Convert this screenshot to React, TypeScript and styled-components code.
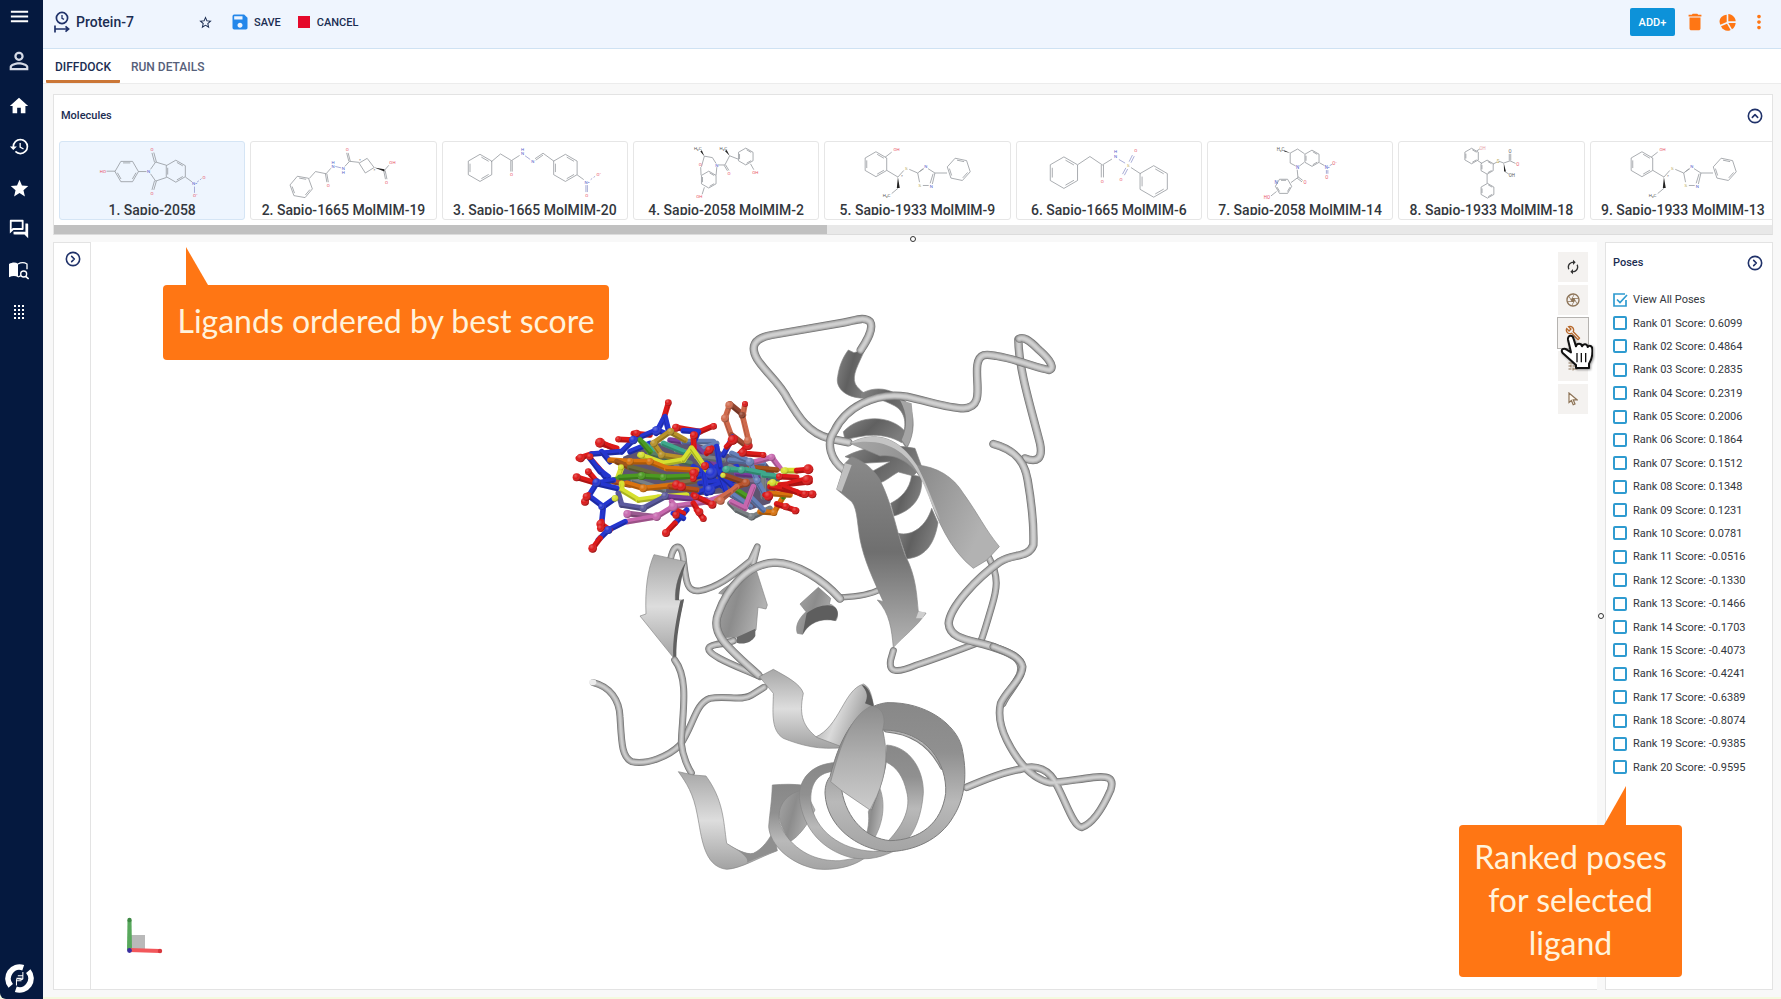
import React, { useState } from "react";
import styled, { createGlobalStyle, css } from "styled-components";
import {
  MdMenu,
  MdPersonOutline,
  MdHome,
  MdHistory,
  MdStar,
  MdStarBorder,
  MdOutlineForum,
  MdSave,
  MdDelete,
  MdMoreVert,
  MdAutorenew,
  MdOutlineCamera,
  MdOutlineBuild,
  MdTune,
} from "react-icons/md";
import { CircleChevronRight, CircleChevronUp } from "lucide-react";

const navy = "#05193f";
const orange = "#ff7614";
const line = "#e3e3e3";

const GlobalStyle = createGlobalStyle`
  * { box-sizing: border-box; }
  body {
    margin: 0;
    background: #f4fadf;
    font-family: Roboto, "Liberation Sans", sans-serif;
    color: #33373d;
  }
  button { font: inherit; color: inherit; border: 0; background: none; padding: 0; cursor: pointer; }
  h1, h2, h3 { margin: 0; font-weight: 500; }
`;

/* ---------- page frame ---------- */

const Shell = styled.div`
  display: flex;
  min-height: 100vh;
`;

const Sidebar = styled.nav`
  flex: 0 0 43px;
  display: flex;
  flex-direction: column;
  align-items: center;
  padding-right: 5px;
  background: ${navy};
  border-bottom-left-radius: 6px;
  color: #fff;
`;

const NavButton = styled.button<{ $height?: number; $last?: boolean }>`
  display: flex;
  align-items: center;
  justify-content: center;
  width: 36px;
  height: ${(p) => p.$height ?? 41}px;
  ${(p) => p.$last && css`margin-top: auto;`}
`;

const Main = styled.main`
  flex: 1;
  min-width: 0;
  display: flex;
  flex-direction: column;
  margin-bottom: 2px;
  background: #f8f8f8;
`;

const TopBar = styled.header`
  display: flex;
  align-items: center;
  height: 49px;
  padding: 0 10px 4px 11px;
  background: #eff5fe;
  border-bottom: 1px solid #cfe2f3;
  color: #1b2d52;
`;

const RecordName = styled.h1`
  display: flex;
  align-items: center;
  gap: 5px;
  width: 144px;
  font-size: 14px;
  line-height: 20px;
`;

const Action = styled.button`
  display: flex;
  align-items: center;
  gap: 4px;
  margin-right: 17px;
  font-size: 11px;
  font-weight: 500;
  color: #1b2d52;
`;

const StopSquare = styled.span`
  width: 12px;
  height: 12px;
  margin-right: 3px;
  background: #e5092b;
`;

const TopActions = styled.div`
  display: flex;
  align-items: center;
  gap: 8px;
  margin-left: auto;
`;

const AddButton = styled.button`
  width: 45px;
  height: 28px;
  border-radius: 2px;
  background: #0d92d9;
  color: #fff;
  font-size: 11px;
  font-weight: 500;
`;

const IconButton = styled.button<{ $color?: string; $wide?: boolean }>`
  display: flex;
  align-items: center;
  justify-content: center;
  width: ${(p) => (p.$wide ? 24 : 20)}px;
  height: 20px;
  color: ${(p) => p.$color ?? "#1f3169"};
`;

const Tabs = styled.div`
  display: flex;
  gap: 2px;
  height: 35px;
  padding-left: 3px;
  background: #fff;
  border-bottom: 1px solid #ececec;
`;

const Tab = styled.button<{ $active?: boolean }>`
  padding: 1px 9px 0;
  border-top: 3px solid transparent;
  border-bottom: 3px solid ${(p) => (p.$active ? "#cb7636" : "transparent")};
  border-radius: 1px;
  font-size: 12px;
  font-weight: 500;
  color: ${(p) => (p.$active ? "#1b2d52" : "#56607a")};
`;

const Workspace = styled.div`
  flex: 1;
  display: flex;
  flex-direction: column;
  padding: 10px 8px 7px 10px;
`;

/* ---------- molecules panel ---------- */

const MoleculesPanel = styled.section`
  background: #fff;
  border: 1px solid ${line};
  border-bottom-color: #dcdcdc;
  overflow: hidden;
`;

const PanelHead = styled.div<{ $height: number; $pad: number }>`
  display: flex;
  align-items: center;
  justify-content: space-between;
  height: ${(p) => p.$height}px;
  padding: 0 7px 5px ${(p) => p.$pad}px;
`;

const PanelTitle = styled.h2`
  font-size: 11px;
  line-height: 16px;
  color: #1b2d52;
`;

const CardStrip = styled.div`
  display: grid;
  grid-auto-flow: column;
  grid-auto-columns: calc((100% - 36px) / 9);
  gap: 5px;
  margin-left: 5px;
`;

const Card = styled.button<{ $selected?: boolean }>`
  display: flex;
  flex-direction: column;
  height: 79px;
  border: 1px solid ${(p) => (p.$selected ? "#d5e5f5" : "#e6e6e6")};
  border-radius: 3px;
  background: ${(p) => (p.$selected ? "#eef5fe" : "#fff")};
`;

const CardDrawing = styled.svg`
  width: 100%;
  height: 58px;
`;

const CardLabel = styled.span`
  width: 100%;
  height: 15px;
  overflow: hidden;
  font-size: 14px;
  line-height: 20px;
  font-weight: 500;
  text-align: center;
  white-space: nowrap;
  color: #33373d;
`;

const ScrollTrack = styled.div`
  height: 9px;
  margin-top: 5px;
  background: #e8e8e8;
`;

const ScrollThumb = styled.div`
  width: 45%;
  height: 100%;
  background: #c1c1c1;
`;

const Splitter = styled.div<{ $vertical?: boolean }>`
  display: flex;
  align-items: center;
  justify-content: center;
  flex: 0 0 ${(p) => (p.$vertical ? 8 : 7)}px;
`;

const SplitterKnob = styled.span`
  flex: none;
  width: 6px;
  height: 6px;
  border: 1px solid #333;
  border-radius: 50%;
  background: #fff;
`;

/* ---------- viewer ---------- */

const Lower = styled.div`
  flex: 1;
  display: flex;
`;

const Rail = styled.aside`
  display: flex;
  justify-content: center;
  align-items: flex-start;
  width: 38px;
  padding: 6px 0 0 2px;
  background: #fff;
  border: 1px solid ${line};
`;

const Viewer = styled.section`
  position: relative;
  flex: 1;
  display: flex;
  align-items: center;
  justify-content: center;
  min-width: 0;
  background: #fff;
  border-bottom: 1px solid ${line};
`;

const ProteinDrawing = styled.svg`
  flex: none;
  width: 568px;
  height: 631px;
`;

const AxisDrawing = styled.svg`
  position: absolute;
  left: 30px;
  bottom: 32px;
`;

const ToolStack = styled.div`
  position: absolute;
  top: 10px;
  right: 9px;
  display: flex;
  flex-direction: column;
  gap: 3px;
`;

const Tool = styled.button<{ $hover?: boolean; $color?: string }>`
  display: flex;
  align-items: center;
  justify-content: center;
  width: 30px;
  height: 30px;
  background: #f4f2f0;
  outline: ${(p) => (p.$hover ? "1px solid #b5b3b0" : "0")};
  color: ${(p) => p.$color ?? "#8d7458"};
`;

const HandPointer = styled.svg`
  position: absolute;
  left: 2px;
  top: 81px;
  filter: drop-shadow(1px 1px 1px rgba(0, 0, 0, 0.4));
`;

/* ---------- poses ---------- */

const PosesPanel = styled.aside`
  width: 168px;
  background: #fff;
  border: 1px solid ${line};
`;

const PoseList = styled.ul`
  display: grid;
  grid-auto-rows: 1fr;
  height: 491px;
  margin: 0;
  padding: 0 0 0 7px;
  list-style: none;
`;

const PoseLabel = styled.label`
  display: flex;
  align-items: center;
  gap: 6px;
  height: 100%;
  font-size: 11px;
  white-space: nowrap;
`;

const CheckHolder = styled.span`
  position: relative;
  width: 14px;
  height: 14px;
`;

const CheckInput = styled.input`
  appearance: none;
  display: block;
  width: 14px;
  height: 14px;
  margin: 0;
  border: 2px solid #2f9bd0;
  border-radius: 2px;
  background: #fff;
  &:checked { border-color: transparent; }
`;

const CheckMark = styled.svg`
  position: absolute;
  inset: 0;
  pointer-events: none;
`;

/* ---------- callouts ---------- */

const Callout = styled.div<{ $wide?: boolean }>`
  position: absolute;
  display: flex;
  align-items: center;
  justify-content: center;
  padding-bottom: 4px;
  border-radius: 4px;
  background: ${orange};
  color: #fff3dc;
  font-family: Lato, "Open Sans", sans-serif;
  font-size: 32px;
  line-height: 43px;
  text-align: center;
  ${(p) =>
    p.$wide
      ? css`left: 163px; top: 285px; width: 446px; height: 75px;`
      : css`right: 99px; bottom: 22px; width: 223px; height: 152px;`}
`;

const CalloutTail = styled.svg<{ $left: number }>`
  position: absolute;
  bottom: 100%;
  left: ${(p) => p.$left}px;
`;

const Page = styled.div`
  position: relative;
`;

/* ---------- chemistry sketches ---------- */

type Label = [number, number, string, string];
interface Sketch {
  x: number;
  w?: number;
  rings: [number, number, number, number][];
  bonds: string;
  hetero?: string;
  wedge?: string;
  labels: Label[];
}

const R = "#e8505f";
const B = "#5560c8";
const S = "#b3a24a";
const K = "#555";

function ringPath(cx: number, cy: number, r: number, rot: number) {
  const pt = (k: number, rr: number) => {
    const a = ((rot + k * 60) * Math.PI) / 180;
    return `${(cx + rr * Math.cos(a)).toFixed(1)} ${(cy + rr * Math.sin(a)).toFixed(1)}`;
  };
  let d = "M" + [0, 1, 2, 3, 4, 5].map((k) => pt(k, r)).join("L") + "Z";
  for (const k of [0, 2, 4]) d += `M${pt(k + 0.12, r * 0.8)}L${pt(k + 0.88, r * 0.8)}`;
  return d;
}

const phenolThiadiazole: Sketch = {
  x: 553,
  rings: [[692, 98, 34, 30], [918, 112, 32, 12]],
  bonds:
    "M717 79L735 65M722 115L752 133L768 115M783 112L806 122L821 110M806 122L811 147M811 118L823 110M834 110L853 122L846 152M848 124L840 150M820 156H836M853 122H886M753 163L735 178",
  wedge: "M752 133L749 163H757Z",
  labels: [[748, 59, "OH", R], [775, 109, "S", S], [828, 105, "N", B], [843, 160, "N", B], [812, 156, "S", S], [763, 132, "*", K], [721, 184, "H₃C", K]],
};

const sketches: Sketch[] = [
  {
    x: 23,
    rings: [[205, 118, 32, 0], [339, 117, 30, 30]],
    bonds:
      "M150 117H174M237 118H259M270 112L284 92L314 101M314 134L284 144L270 124M286 92L279 66M281 93L274 67M286 144L279 168M281 143L274 168M365 133L383 146",
    hetero: "M390 159V176M397 147L402 143M405 141L409 137",
    labels: [[140, 117, "HO", R], [265, 118, "N", B], [274, 58, "O", R], [274, 177, "O", R], [390, 152, "N⁺", B], [416, 133, "O", R], [392, 184, "O⁻", R]],
  },
  {
    x: 541,
    rings: [[678, 160, 31, 10]],
    bonds:
      "M700 137L717 118L746 124L759 109M744 124L748 147M748 124L752 147M797 104L810 90L836 93M808 90L802 67M812 90L806 67M836 95L858 82L877 107L853 122ZM905 115L917 101M903 115L908 139M907 115L912 139",
    hetero: "M771 104L787 108",
    wedge: "M877 107L905 112V118Z",
    labels: [[765, 94, "H", B], [765, 104, "N", B], [793, 111, "N", B], [793, 122, "H", B], [804, 58, "O", R], [752, 156, "O", R], [927, 94, "OH", R], [911, 147, "O", R], [838, 88, "*", K], [878, 116, "*", K]],
  },
  {
    x: 1059,
    rings: [[1160, 108, 37, 30], [1393, 108, 37, 30]],
    bonds:
      "M1190 92L1216 70L1246 88L1268 74M1244 88V118M1248 88V118M1310 83L1332 68L1362 90M1312 87L1332 73M1425 127L1443 140",
    hetero: "M1283 75L1297 85M1462 140L1466 137M1470 134L1474 131M1449 155V174M1453 155V174",
    labels: [[1246, 127, "O", R], [1276, 59, "H", B], [1276, 70, "N", B], [1304, 90, "N", B], [1452, 147, "N⁺", B], [1484, 126, "O⁻", R], [1451, 183, "O", R]],
  },
  {
    x: 36,
    rings: [[240, 140, 23, 30], [341, 77, 23, 30]],
    bonds:
      "M228 76L250 80L260 96M220 105L228 76M219 128L218 106M260 128L262 106M228 161L222 180M266 100H284L297 75L320 84M282 101L291 116M286 100L295 115M354 97L363 113",
    wedge: "M228 76L217 63L221 60ZM297 75L284 62L289 59Z",
    labels: [[210, 56, "H₃C", K], [217, 100, "O", R], [262, 101, "N", B], [295, 123, "O", R], [280, 55, "H₃C", K], [367, 122, "OH", R], [214, 187, "OH", R]],
  },
  phenolThiadiazole,
  {
    x: 1071,
    rings: [[1199, 121, 43, 30], [1444, 145, 43, 30]],
    bonds: "M1237 99L1270 77L1304 100L1330 84M1301 100V134M1307 100V134M1382 107L1408 124",
    hetero: "M1349 85L1366 95M1377 91L1386 73M1382 94L1391 76M1368 108L1359 125M1373 111L1364 128",
    labels: [[1304, 146, "O", R], [1340, 63, "H", B], [1340, 78, "N", B], [1375, 101, "S", S], [1395, 62, "O", R], [1355, 140, "O", R]],
  },
  {
    x: 46,
    w: 494,
    rings: [[325, 82, 22, 30], [248, 158, 22, 0]],
    bonds:
      "M266 68L286 57L305 70M304 93L291 103M281 103L266 95V68M345 94L359 102M285 113L287 134L268 148M287 132L300 142M285 136L298 146M229 172L214 184",
    hetero: "M373 102L380 98M364 114V124M368 114V124",
    wedge: "M266 68L250 60V64Z",
    labels: [[240, 58, "H₃C", K], [286, 108, "N", B], [366, 106, "N⁺", B], [386, 96, "O⁻", R], [365, 133, "O", R], [306, 148, "O", R], [228, 148, "N", B], [203, 187, "HO", R]],
  },
  {
    x: 554,
    w: 494,
    rings: [[748, 76, 21, 30], [790, 106, 19, 30], [791, 170, 20, 30]],
    bonds: "M762 62L770 57M764 88L776 96M806 98L817 92M822 90L835 95L852 89L867 96M850 88V70M854 88V70M838 118L849 125M790 125V150",
    wedge: "M835 95L836 118H841Z",
    labels: [[778, 55, "OH", "#e8a0a8"], [820, 90, "S", S], [852, 65, "O", K], [873, 98, "O", R], [857, 128, "OH", K]],
  },
  phenolThiadiazole,
];

function MoleculeSketch({ data }: { data: Sketch }) {
  return (
    <CardDrawing viewBox={`${data.x} 38 ${data.w ?? 503} 157`} aria-hidden="true">
      <g fill="none" strokeWidth="2">
        <path stroke="#8b8f94" d={data.rings.map((r) => ringPath(...r)).join("") + data.bonds} />
        {data.hetero && <path stroke="#8a90c8" d={data.hetero} />}
      </g>
      {data.wedge && <path d={data.wedge} fill="#222" />}
      {data.labels.map(([x, y, t, c], i) => (
        <text key={i} x={x} y={y + 4} fill={c} fontSize="12" textAnchor="middle">
          {t}
        </text>
      ))}
    </CardDrawing>
  );
}

/* ---------- protein cartoon ---------- */

function Tube({ d, w = 24 }: { d: string; w?: number }) {
  return (
    <g fill="none" strokeLinecap="round" strokeLinejoin="round">
      <path d={d} stroke="#757575" strokeWidth={w + 1} />
      <path d={d} stroke="#999999" strokeWidth={w - 3} />
      <path d={d} stroke="#b2b2b2" strokeWidth={w - 7} />
      <path d={d} stroke="#c4c4c4" strokeWidth={w - 12} />
      <path d={d} stroke="#d0d0d0" strokeWidth={w - 17} />
    </g>
  );
}

function Ribbon({ d, fill }: { d: string; fill: string }) {
  return <path d={d} fill={`url(#${fill})`} stroke="#858585" strokeWidth="2" strokeLinejoin="round" />;
}

function Gradient({ id, stops, v }: { id: string; stops: string[]; v?: boolean }) {
  return (
    <linearGradient id={id} x1="0" y1="0" x2={v ? "0" : "1"} y2={v ? "1" : "0.4"}>
      {stops.map((c, i) => (
        <stop key={i} offset={i / (stops.length - 1)} stopColor={c} />
      ))}
    </linearGradient>
  );
}

type Bond = [number, number, number, number, string];
const blue = "#2536cf";
const red = "#dc1a1a";
const grey = "#7a8084";
const brown = "#b8532c";
const gold = "#b8922a";
const amber = "#d9730f";
const lime = "#d6e030";
const green = "#4c9a22";
const pink = "#c768ae";
const slate = "#6680b8";
const violet = "#5b5a9e";
const salmon = "#cf6a4c";
const teal = "#3fa88c";
const purple = "#7a3f9c";

const bonds: Bond[] = [
  [240, 215, 300, 190, blue], [300, 205, 380, 260, grey], [380, 210, 470, 230, grey], [280, 190, 320, 220, teal],
  [300, 220, 420, 250, "#5c7f66"], [340, 190, 400, 215, teal], [250, 300, 340, 330, grey], [330, 320, 450, 300, "#8a6b4a"],
  [360, 180, 440, 190, purple], [400, 185, 490, 185, slate], [450, 210, 500, 190, slate], [440, 200, 500, 260, purple],
  [440, 230, 520, 240, grey], [430, 260, 520, 320, blue], [440, 290, 560, 260, blue], [450, 310, 560, 300, blue],
  [440, 340, 540, 300, blue], [460, 270, 470, 340, blue], [500, 260, 530, 340, blue], [470, 250, 560, 330, blue],
  [540, 240, 640, 250, slate], [540, 260, 620, 300, grey], [560, 300, 660, 310, "#7d6a8c"], [560, 280, 650, 290, purple],
  [580, 220, 640, 225, red], [600, 250, 665, 232, pink], [665, 232, 690, 265, pink], [600, 262, 680, 270, "#a8511c"],
  [560, 330, 590, 350, green], [540, 370, 560, 390, grey], [560, 390, 605, 412, grey], [605, 412, 660, 385, grey],
  [630, 395, 672, 398, amber], [672, 398, 700, 350, amber], [700, 350, 700, 320, green], [600, 350, 640, 390, slate],
  [550, 345, 600, 380, slate], [640, 290, 640, 350, grey], [660, 340, 720, 345, amber],
  [150, 190, 200, 205, red], [150, 185, 190, 205, red], [120, 235, 155, 275, red], [85, 235, 125, 222, red],
  [125, 222, 215, 215, blue], [155, 215, 180, 245, blue], [215, 215, 250, 180, blue], [205, 178, 250, 180, red],
  [250, 160, 300, 165, red], [250, 180, 320, 150, blue], [320, 150, 345, 160, blue], [355, 70, 340, 120, red],
  [340, 118, 318, 160, blue], [345, 110, 355, 150, blue], [380, 143, 450, 155, red], [400, 152, 450, 155, blue],
  [450, 155, 490, 138, red], [445, 155, 430, 190, blue], [270, 180, 300, 215, green],
  [310, 190, 360, 155, gold], [360, 155, 405, 180, gold], [310, 190, 335, 225, gold], [335, 225, 400, 235, gold],
  [270, 225, 340, 250, lime], [340, 250, 400, 240, lime], [400, 240, 425, 205, lime], [430, 170, 432, 205, red],
  [425, 205, 470, 270, lime], [180, 240, 240, 245, amber], [215, 262, 205, 290, lime], [225, 245, 300, 245, amber],
  [300, 245, 350, 265, amber], [350, 265, 440, 270, amber], [200, 245, 240, 262, "#a0561c"],
  [240, 262, 340, 290, "#6b6a3a"], [170, 305, 215, 295, green], [210, 292, 275, 288, green], [275, 288, 340, 292, green],
  [340, 292, 430, 288, green], [190, 305, 240, 315, brown], [230, 310, 280, 325, amber], [280, 325, 380, 315, amber],
  [360, 320, 440, 330, "#b5501a"], [215, 310, 215, 330, lime], [215, 330, 265, 360, lime], [265, 360, 325, 352, lime],
  [325, 352, 410, 345, lime], [205, 340, 215, 375, violet], [215, 375, 280, 385, violet], [280, 385, 345, 350, violet],
  [345, 350, 470, 360, purple], [230, 400, 310, 410, "#9a5a90"], [230, 425, 320, 410, pink], [320, 410, 370, 380, pink],
  [370, 380, 470, 365, pink], [365, 365, 380, 400, pink], [470, 365, 530, 345, pink],
  [155, 275, 175, 290, blue], [145, 265, 165, 290, blue], [120, 235, 150, 275, blue], [80, 292, 140, 310, red], [115, 275, 145, 310, red],
  [140, 310, 190, 300, blue], [140, 310, 115, 350, blue], [115, 345, 105, 365, red], [145, 312, 200, 325, blue],
  [120, 350, 160, 380, blue], [195, 355, 160, 380, blue], [160, 380, 155, 430, blue], [155, 425, 152, 445, red],
  [225, 425, 175, 450, blue], [175, 450, 145, 480, blue], [150, 475, 128, 505, red], [150, 430, 180, 450, red],
  [410, 390, 375, 430, blue], [375, 430, 348, 458, red], [375, 390, 400, 400, red], [370, 400, 400, 415, blue],
  [430, 370, 455, 410, red], [440, 390, 460, 415, red], [430, 345, 490, 375, red],
  [540, 72, 525, 115, salmon], [525, 115, 545, 170, salmon], [540, 72, 580, 105, "#8f4430"], [585, 72, 578, 110, salmon],
  [578, 110, 595, 180, salmon], [545, 165, 585, 195, "#a34b33"], [548, 172, 520, 225, blue], [555, 175, 530, 200, red],
  [500, 200, 510, 260, blue], [595, 195, 565, 225, red], [470, 220, 485, 205, red],
  [545, 220, 600, 245, slate], [600, 245, 620, 300, slate], [620, 300, 645, 345, slate], [645, 345, 660, 352, red],
  [525, 268, 590, 270, teal], [590, 270, 640, 280, teal], [520, 285, 590, 310, "#9c4c28"], [590, 310, 560, 320, brown],
  [560, 320, 512, 360, salmon], [610, 320, 585, 385, pink], [585, 385, 545, 365, pink],
  [640, 285, 690, 290, teal], [690, 290, 740, 292, red], [660, 310, 700, 315, lime], [690, 315, 780, 305, red],
  [700, 272, 740, 272, lime], [740, 272, 780, 268, red], [660, 320, 740, 335, red], [700, 320, 760, 345, red],
  [750, 340, 790, 342, red], [720, 310, 780, 295, red], [680, 372, 740, 392, red], [500, 362, 540, 335, salmon],
];

const atoms: [number, number, number, string][] = [
  [355, 68, 10, red], [205, 178, 9, red], [150, 188, 15, red], [92, 234, 13, red], [120, 230, 10, red], [80, 292, 12, red],
  [115, 275, 10, red], [105, 365, 12, red], [110, 350, 12, red], [152, 432, 13, red], [152, 445, 11, red], [128, 505, 13, red],
  [348, 459, 12, red], [378, 405, 11, red], [378, 143, 12, red], [491, 139, 10, red], [432, 166, 12, red], [260, 160, 11, red],
  [585, 72, 9, red], [548, 180, 15, red], [595, 197, 13, red], [578, 218, 12, red], [465, 258, 12, red], [432, 280, 14, red],
  [430, 296, 10, red], [380, 315, 14, red], [395, 320, 13, red], [437, 350, 10, red], [487, 374, 12, red], [448, 396, 12, red],
  [460, 416, 10, red], [775, 268, 15, red], [772, 300, 16, red], [787, 343, 12, red], [736, 392, 11, red], [708, 380, 11, red],
  [655, 348, 14, red], [688, 290, 10, red], [765, 343, 11, red], [640, 225, 9, red], [478, 210, 12, red],
  [195, 355, 10, lime], [275, 225, 10, lime], [213, 262, 9, lime], [668, 308, 11, lime], [705, 272, 10, lime], [519, 286, 8, lime],
  [300, 245, 11, amber], [275, 288, 12, green], [340, 292, 11, green], [280, 325, 12, amber], [240, 245, 11, amber],
  [320, 410, 13, pink], [370, 380, 14, pink], [232, 402, 12, pink], [280, 385, 11, violet], [345, 348, 11, violet],
  [538, 76, 12, salmon], [525, 115, 12, salmon], [576, 105, 10, "#8f4430"], [594, 182, 12, salmon], [512, 362, 12, salmon],
  [155, 380, 10, blue], [175, 450, 12, blue], [140, 308, 13, blue], [485, 280, 18, blue], [480, 330, 16, blue], [250, 180, 13, blue],
  [320, 152, 14, blue], [600, 246, 13, slate], [622, 302, 10, slate], [530, 268, 11, teal], [575, 270, 11, teal], [588, 308, 12, brown],
  [665, 232, 11, pink], [362, 155, 11, gold], [312, 190, 11, gold], [335, 225, 11, gold], [605, 410, 11, grey], [672, 398, 10, amber],
];

function Protein() {
  return (
    <ProteinDrawing viewBox="560 300 568 631" role="img" aria-label="Docked protein">
      <defs>
        <Gradient id="mid" stops={["#a8a8a8", "#8c8c8c", "#b2b2b2"]} />
        <Gradient id="dark" stops={["#858585", "#606060", "#7d7d7d"]} />
        <Gradient id="strand" stops={["#8a8a8a", "#6f6f6f", "#b4b4b4"]} v />
        <Gradient id="light" stops={["#a8a8a8", "#dddddd", "#a2a2a2"]} v />
        <Gradient id="sweep" stops={["#969696", "#dadada", "#929292"]} />
        <Gradient id="plate" stops={["#8d8d8d", "#b0b0b0", "#cccccc"]} v />
        <Gradient id="ring" stops={["#888888", "#909090", "#b9b9b9", "#a4a4a4"]} v />
        <radialGradient id="shine" cx="0.35" cy="0.3" r="0.7">
          <stop offset="0" stopColor="#fff" stopOpacity="0.3" />
          <stop offset="0.5" stopColor="#fff" stopOpacity="0" />
          <stop offset="1" stopColor="#000" stopOpacity="0.3" />
        </radialGradient>
      </defs>

      {/* upper fold: helix, loops and the two long strands */}
      <g transform="translate(730 300) scale(0.33333)">
        <Tube d="M865 118C866 210 905 330 930 430C940 478 920 488 885 475" />
        <Ribbon fill="dark" d="M355 150L372 158L405 148C385 195 365 225 376 252C390 275 410 282 420 294C350 300 315 265 323 230C328 195 340 170 355 150Z" />
        <Ribbon fill="dark" d="M395 280C450 250 510 275 540 320C560 370 545 420 530 445L512 420C535 375 525 335 495 318C460 300 430 290 395 292Z" />
        <Ribbon fill="dark" d="M340 395C390 340 490 345 530 400L515 428C460 395 400 405 345 420Z" />
        <Ribbon fill="dark" d="M345 470C400 440 480 430 555 445L575 500L550 528L505 516C480 530 465 545 450 548L425 515L480 485L400 490Z" />
        <Ribbon fill="dark" d="M545 525C540 570 510 595 482 610L492 648C550 630 580 590 575 530Z" />
        <Ribbon fill="dark" d="M505 700C550 710 590 675 605 625L624 668C612 740 580 772 530 776Z" />
        <path d="M545 310C552 370 548 420 530 440L515 420C535 380 532 340 510 300Z" fill="#a5a5a5" />
        <Tube d="M392 150C412 120 432 85 420 65C400 48 375 62 340 68L125 105C70 115 60 140 82 178C105 215 150 250 172 295C205 350 235 400 300 416L355 427" />
        <Tube d="M345 512C300 480 288 430 312 395C345 325 430 275 530 290C600 305 655 325 700 325C765 322 735 250 742 195C748 155 775 164 800 168C870 180 920 205 958 210C980 200 945 165 925 148C895 118 880 110 868 116" />
        <Tube d="M775 770C810 830 800 870 785 920C770 970 762 1000 752 1025C700 1045 620 1075 560 1095C500 1120 475 1118 482 1080L490 1052" w={20} />
        <Tube d="M450 868C420 885 380 890 335 892" w={18} />
        <Tube d="M790 432C860 450 885 490 893 540C905 610 912 680 910 735C895 775 850 760 810 785C740 835 660 920 656 970C660 1025 740 1020 800 1045C860 1065 885 1085 870 1125C850 1165 830 1180 817 1210" />
        <Ribbon fill="mid" d="M360 430C420 395 500 400 560 495C620 500 670 530 700 580C750 650 760 680 808 740L782 768L768 782L730 805C660 750 620 660 592 570C560 500 510 460 450 468Z" />
        <path d="M360 430C420 395 500 400 560 495C590 550 615 620 630 660C610 630 590 570 570 530C530 450 460 410 360 430Z" fill="#c4c4c4" />
        <Ribbon fill="strand" d="M365 470C395 480 430 505 450 540C490 620 500 700 525 765C560 830 560 890 565 935L588 940C560 980 520 1010 490 1042C485 990 480 940 442 900L460 905C440 860 410 800 395 740C380 680 385 630 365 605L320 568L345 490Z" />
        <path d="M345 490L320 568L335 575L365 495Z" fill="#c0c0c0" />
        <path d="M565 935L588 936L578 955L558 955Z" fill="#cfcfcf" />
      </g>

      {/* left fold */}
      <g transform="translate(560 530) scale(0.33333)">
        <Tube d="M332 85C342 38 365 40 370 85C378 150 378 190 420 182C480 172 530 125 572 92L592 50L580 100" w={19} />
        <Ribbon fill="mid" d="M585 108L622 225L618 237L594 232L588 300C570 325 530 322 480 325C460 270 490 230 510 198L476 190C490 170 540 150 585 108Z" />
        <path d="M530 322L586 296V318C575 338 550 345 530 338Z" fill="#686868" />
        <path d="M476 325L530 322V340L450 352Z" fill="#c8c8c8" />
        <Ribbon fill="light" d="M282 74L378 95C352 140 345 180 346 210H370C358 270 340 320 342 385L240 258L258 252C255 180 262 120 282 74Z" />
        <path d="M372 207C360 270 348 320 349 385H340C336 330 350 260 361 212ZM378 96C364 140 358 180 357 210H346C344 170 356 130 378 96Z" fill="#606060" />
        <Ribbon fill="mid" d="M775 172L720 222L738 245C712 270 706 290 712 310L728 313C745 280 780 262 828 272C840 250 828 226 808 222L812 205Z" />
        <path d="M740 250C770 225 815 218 828 235C838 250 832 262 826 272C780 262 745 280 728 313Z" fill="#5e5e5e" />
        <Tube d="M600 440C560 420 430 375 448 352C460 340 490 345 520 332" w={20} />
        <Tube d="M840 206C790 150 710 98 645 98C560 100 500 180 475 250C450 310 500 350 595 435" />
        <Tube d="M100 458C150 470 178 510 180 560C185 640 185 680 215 695C260 705 325 680 360 645C400 590 405 520 450 505C500 495 545 515 575 495L612 472" w={20} />
        <Tube d="M344 390C390 450 365 560 364 640C368 680 385 715 394 728" w={20} />
        <Ribbon fill="sweep" d="M765 622C840 590 850 480 910 462C930 470 936 500 940 525L880 590L855 652C815 657 785 650 765 622Z" />
        <path d="M905 465C925 465 936 500 942 530L915 520C925 500 922 485 905 465Z" fill="#5c5c5c" />
        <Ribbon fill="light" d="M598 440L640 418C680 440 722 462 730 490C715 560 732 590 770 622L850 652C780 662 720 645 670 625C630 600 640 540 640 490Z" />
        <Ribbon fill="light" d="M355 725L400 735L438 738C490 810 490 870 500 940C530 960 560 975 580 970C610 955 625 930 640 905L652 962C590 985 545 1015 500 1018C430 1010 425 920 412 855C400 790 380 760 355 725Z" />
        <path d="M500 940C530 960 560 975 580 970C610 955 625 930 640 905L652 962C615 974 590 985 560 998C570 985 540 965 500 940Z" fill="#8f8f8f" />
        <ellipse cx="98" cy="457" rx="11" ry="9" fill="#ececec" />
      </g>

      {/* lower helix and trailing loop */}
      <g transform="translate(740 630) scale(0.33333)">
        <Tube d="M680 472C720 455 790 425 840 418C890 400 930 420 950 465C980 520 1000 590 1025 592C1060 580 1090 530 1112 480C1125 440 1100 438 1060 442C1010 448 960 458 930 458C870 445 830 390 800 330C780 290 775 250 782 220C800 180 845 150 848 110C842 80 800 65 760 50" w={22} />
        <Ribbon fill="mid" d="M120 505L190 470L225 540C200 590 175 620 150 635C118 590 110 545 120 505Z" />
        <Ribbon fill="ring" d="M97 465C130 462 165 462 190 466L180 482C130 495 100 545 128 600C165 665 230 695 300 692L380 680C340 712 280 722 230 717C150 702 90 645 86 590C90 540 95 520 97 465Z" />
        <Ribbon fill="ring" d="M440 345C510 350 552 420 550 490C545 555 525 605 500 632H445C495 580 512 530 500 485C490 440 470 410 436 395Z" />
        <Ribbon fill="mid" d="M385 545L418 470C438 520 430 580 400 630L372 635C386 600 388 570 385 545Z" />
        <Ribbon fill="ring" d="M300 398C225 395 175 440 178 505C190 600 250 660 330 682C390 695 430 678 470 660L400 664C300 660 225 600 213 520C208 460 235 430 275 425Z" />
        <Tube d="M440 298C520 305 575 345 608 410" w={18} />
        <path
          d="M270 440C305 300 360 228 440 218C560 215 648 285 665 350C682 425 678 500 640 560C600 630 520 665 440 665C350 655 260 590 255 490C255 465 262 450 270 440ZM305 480C320 570 380 625 450 632C540 630 605 580 617 490C622 400 560 300 428 300L438 400C430 450 410 500 395 540Z"
          fill="url(#ring)"
          fillRule="evenodd"
          stroke="#7c7c7c"
          strokeWidth="3"
        />
        <Ribbon fill="plate" d="M272 455C300 350 330 260 390 230C425 225 440 260 428 300C445 370 440 430 410 500L390 540L305 482Z" />
      </g>

      {/* overlaid ligand poses */}
      <g transform="translate(550 380) scale(0.33333)" strokeLinecap="round">
        <path d="M220 230L310 190L440 190L560 230L650 250L690 300L660 370L600 390L520 340L400 350L300 330L200 300Z" fill="#5d5470" />
        {bonds.map(([x1, y1, x2, y2, c], i) => (
          <g key={i}>
            <line x1={x1} y1={y1} x2={x2} y2={y2} stroke={c} strokeWidth="17" />
            <line x1={x1} y1={y1 + 4} x2={x2} y2={y2 + 4} stroke="#000" strokeOpacity="0.22" strokeWidth="9" />
            <line x1={x1} y1={y1 - 2} x2={x2} y2={y2 - 2} stroke={c} strokeWidth="8" />
          </g>
        ))}
        {atoms.map(([x, y, r, c], i) => (
          <g key={i}>
            <circle cx={x} cy={y} r={r} fill={c} />
            <circle cx={x} cy={y} r={r} fill="url(#shine)" />
          </g>
        ))}
      </g>
    </ProteinDrawing>
  );
}

/* ---------- small icons ---------- */

const TimelineIcon = () => (
  <svg width="17" height="22" viewBox="0 0 17 22" fill="none" stroke="#1f3169" strokeWidth="1.7">
    <circle cx="8" cy="7" r="5.6" />
    <path d="M8 4v3.4l2 1" strokeWidth="1.3" />
    <path d="M1 14.5v7M1 18h13M11.5 15.3L14.6 18l-3.1 2.7" />
  </svg>
);

const BookSearchIcon = () => (
  <svg width="20" height="18" viewBox="0 0 60 54" fill="none" stroke="#fff">
    <path d="M0 6C10 0 20 0 27 5V46C20 41 10 41 0 46Z" fill="#fff" stroke="none" />
    <path d="M27 6C36 1 46 1 54 6V22M27 45L36 41" strokeWidth="4" />
    <circle cx="44" cy="36" r="9" strokeWidth="4" />
    <path d="M50 43L59 51" strokeWidth="5" />
  </svg>
);

const DotsIcon = () => (
  <svg width="11" height="14" viewBox="0 0 11 14" fill="#fff">
    {[0, 4, 8, 12].map((y) => [0, 4, 8].map((x) => <rect key={`${x}-${y}`} x={x} y={y} width="2" height="2" />))}
  </svg>
);

const BrandIcon = () => (
  <svg width="29" height="29" viewBox="0 0 86 86" fill="none" stroke="#fff">
    <path d="M54 11A34 34 0 0 0 17 65" strokeWidth="17" />
    <path d="M32 75A34 34 0 0 0 69 21" strokeWidth="17" />
    <path d="M53 24V44C53 50 34 38 34 48V64M34 42H53M38 35H53M34 50H49" strokeWidth="3" />
  </svg>
);

const PieIcon = () => (
  <svg width="17" height="17" viewBox="0 0 51 51" fill={orange}>
    <path d="M23 2V24L4 32C-3 18 6 4 23 2Z" />
    <path d="M28 0C40 1 50 11 50 22H28Z" />
    <path d="M28 27H50C49 36 45 42 39 46Z" />
    <path d="M24 29L35 48C24 54 12 49 6 37Z" />
  </svg>
);

const CursorIcon = () => (
  <svg width="10" height="14" viewBox="0 0 10 14" fill="#fffaf2" stroke="#8d7458" strokeWidth="1.2">
    <path d="M1 1v9.5l2.4-2 1.8 4.3 1.8-.8-1.8-4.2H9Z" />
  </svg>
);

const poseScores = [
  "0.6099", "0.4864", "0.2835", "0.2319", "0.2006", "0.1864", "0.1512", "0.1348", "0.1231", "0.0781",
  "-0.0516", "-0.1330", "-0.1466", "-0.1703", "-0.4073", "-0.4241", "-0.6389", "-0.8074", "-0.9385", "-0.9595",
];

const ligands = [
  "Sapio-2058", "Sapio-1665 MolMIM-19", "Sapio-1665 MolMIM-20", "Sapio-2058 MolMIM-2", "Sapio-1933 MolMIM-9",
  "Sapio-1665 MolMIM-6", "Sapio-2058 MolMIM-14", "Sapio-1933 MolMIM-18", "Sapio-1933 MolMIM-13",
];

function PoseOption({ text, initial }: { text: string; initial?: boolean }) {
  const [on, setOn] = useState(!!initial);
  return (
    <li>
      <PoseLabel>
        <CheckHolder>
          <CheckInput type="checkbox" checked={on} onChange={() => setOn(!on)} />
          {on && (
            <CheckMark width="15" height="14" viewBox="0 0 15 14" fill="none" stroke="#2f9bd0" strokeWidth="1.7">
              <path d="M12 1H1V13H13V7M4 6.5L7 9.5L14 2" />
            </CheckMark>
          )}
        </CheckHolder>
        {text}
      </PoseLabel>
    </li>
  );
}

export default function App() {
  const [selected, setSelected] = useState(0);
  return (
    <Page>
      <GlobalStyle />
      <Shell>
        <Sidebar aria-label="Main">
          <NavButton $height={33} aria-label="Menu"><MdMenu size={23} /></NavButton>
          <NavButton $height={55} aria-label="Profile"><MdPersonOutline size={28} color="#d5dae6" /></NavButton>
          <NavButton $height={36} aria-label="Home"><MdHome size={22} /></NavButton>
          <NavButton $height={45} aria-label="History"><MdHistory size={21} /></NavButton>
          <NavButton $height={38} aria-label="Favorites"><MdStar size={21} /></NavButton>
          <NavButton $height={43} aria-label="Messages"><MdOutlineForum size={22} /></NavButton>
          <NavButton aria-label="Search library"><BookSearchIcon /></NavButton>
          <NavButton $height={41} aria-label="Apps"><DotsIcon /></NavButton>
          <NavButton $last aria-label="About"><BrandIcon /></NavButton>
        </Sidebar>
        <Main>
          <TopBar>
            <RecordName><TimelineIcon />Protein-7</RecordName>
            <Action aria-label="Favorite"><MdStarBorder size={15} /></Action>
            <Action><MdSave size={20} color="#2487ea" />SAVE</Action>
            <Action><StopSquare />CANCEL</Action>
            <TopActions>
              <AddButton>ADD+</AddButton>
              <IconButton $wide $color={orange} aria-label="Delete"><MdDelete size={22} /></IconButton>
              <IconButton $wide $color={orange} aria-label="Charts"><PieIcon /></IconButton>
              <IconButton $wide $color={orange} aria-label="More"><MdMoreVert size={22} /></IconButton>
            </TopActions>
          </TopBar>
          <Tabs role="tablist">
            <Tab role="tab" $active aria-selected="true">DIFFDOCK</Tab>
            <Tab role="tab" aria-selected="false">RUN DETAILS</Tab>
          </Tabs>
          <Workspace>
            <MoleculesPanel>
              <PanelHead $height={46} $pad={7}>
                <PanelTitle>Molecules</PanelTitle>
                <IconButton aria-label="Collapse molecules"><CircleChevronUp size={16} strokeWidth={2.4} /></IconButton>
              </PanelHead>
              <CardStrip>
                {ligands.map((name, i) => (
                  <Card key={name} $selected={i === selected} onClick={() => setSelected(i)}>
                    <MoleculeSketch data={sketches[i]} />
                    <CardLabel>{`${i + 1}. ${name}`}</CardLabel>
                  </Card>
                ))}
              </CardStrip>
              <ScrollTrack><ScrollThumb /></ScrollTrack>
            </MoleculesPanel>
            <Splitter><SplitterKnob /></Splitter>
            <Lower>
              <Rail>
                <IconButton aria-label="Expand panel"><CircleChevronRight size={16} strokeWidth={2.4} /></IconButton>
              </Rail>
              <Viewer>
                <Protein />
                <AxisDrawing width="42" height="44" viewBox="0 0 42 44">
                  <rect x="9" y="22" width="15" height="14" fill="#b9b9b9" />
                  <path d="M6.500 7L10.500 7L11 37H6Z" fill="#58a85c" />
                  <circle cx="8.500" cy="7" r="2.200" fill="#3f8a45" />
                  <path d="M8 35L39 36V40L8 39Z" fill="#f2575b" />
                  <circle cx="39" cy="38" r="2.200" fill="#d8373c" />
                  <circle cx="8.500" cy="37.500" r="2.400" fill="#3a2fa0" />
                </AxisDrawing>
                <ToolStack>
                  <Tool $color="#333" aria-label="Reset view"><MdAutorenew size={16} /></Tool>
                  <Tool aria-label="Screenshot"><MdOutlineCamera size={16} /></Tool>
                  <Tool $hover $color="#b8692c" aria-label="Controls"><MdOutlineBuild size={16} /></Tool>
                  <Tool aria-label="Settings"><MdTune size={12} /></Tool>
                  <Tool aria-label="Selection mode"><CursorIcon /></Tool>
                  <HandPointer width="33" height="37" viewBox="60 1002 99 111" aria-hidden="true">
                    <path
                      d="M84 1022C82 1008 98 1006 101 1020L108 1042C110 1032 124 1032 126 1042C130 1032 142 1034 143 1044C150 1036 157 1042 157 1052C158 1070 156 1080 147 1094V1107H108V1098C98 1088 88 1080 68 1062C60 1050 72 1046 80 1052L93 1060Z"
                      fill="#fff"
                      stroke="#111"
                      strokeWidth="6"
                      strokeLinejoin="round"
                    />
                    <path d="M111 1062V1090M124 1062V1090M137 1062V1090" stroke="#111" strokeWidth="4" />
                  </HandPointer>
                </ToolStack>
              </Viewer>
              <Splitter $vertical><SplitterKnob /></Splitter>
              <PosesPanel>
                <PanelHead $height={45} $pad={7}>
                  <PanelTitle>Poses</PanelTitle>
                  <IconButton aria-label="Collapse poses"><CircleChevronRight size={16} strokeWidth={2.4} /></IconButton>
                </PanelHead>
                <PoseList>
                  <PoseOption text="View All Poses" initial />
                  {poseScores.map((s, i) => (
                    <PoseOption key={i} text={`Rank ${String(i + 1).padStart(2, "0")} Score: ${s}`} />
                  ))}
                </PoseList>
              </PosesPanel>
            </Lower>
          </Workspace>
        </Main>
      </Shell>
      <Callout $wide>
        <CalloutTail $left={23} width="22" height="38" viewBox="0 0 22 38"><path d="M0 0L22 38H0Z" fill={orange} /></CalloutTail>
        Ligands ordered by best score
      </Callout>
      <Callout>
        <CalloutTail $left={145} width="22" height="39" viewBox="0 0 22 39"><path d="M22 0V39H0Z" fill={orange} /></CalloutTail>
        Ranked poses<br />for selected<br />ligand
      </Callout>
    </Page>
  );
}
